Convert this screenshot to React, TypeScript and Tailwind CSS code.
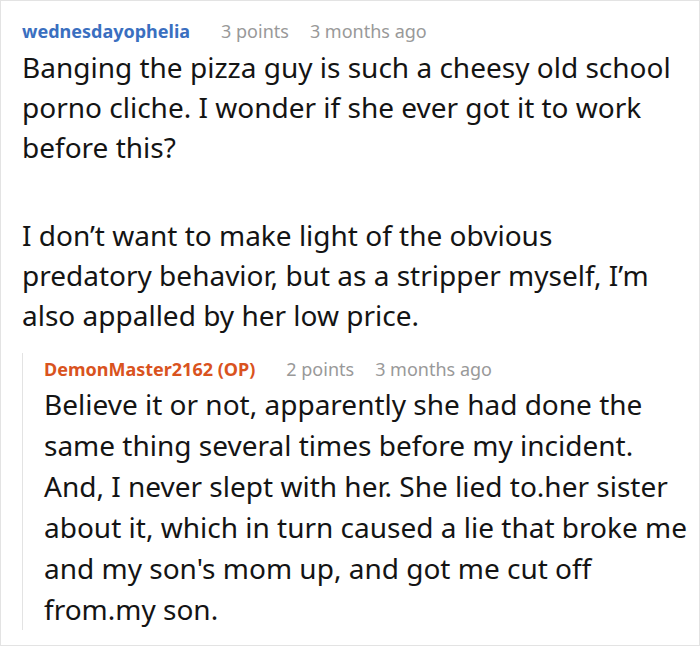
const FONT = "font-['Noto_Sans',sans-serif]";

function Meta({ name, color, points, ago }: { name: string; color: string; points: string; ago: string }) {
  return (
    <div className="flex items-center text-[18px] leading-[24px]">
      <span className={`font-bold ${color}`}>{name}</span>
      <span className="ml-[31px] text-[#999999]">{points}</span>
      <span className="ml-[21px] text-[#999999]">{ago}</span>
    </div>
  );
}

export default function App() {
  return (
    <div className={`${FONT} w-[700px] h-[646px] bg-white border border-[#e3e3e3] pl-[21px] pr-[8px] pt-[18px]`}>
      <Meta name="wednesdayophelia" color="text-[#3a6fc0]" points="3 points" ago="3 months ago" />
      <div className="mt-[4px] pr-[5px] text-[28px] leading-[40px] text-[#141414]">
        <p>
          Banging the pizza guy is such a cheesy old school porno cliche. I wonder if she ever got it to work
          before this?
        </p>
        <p className="mt-[48px]">
          I don’t want to make light of the obvious predatory behavior, but as a stripper myself, I’m also
          appalled by her low price.
        </p>
      </div>
      <div className="mt-[18px] border-l border-[#e3e3e3] pl-[21px] pt-[4px]">
        <Meta name="DemonMaster2162 (OP)" color="text-[#d9531e]" points="2 points" ago="3 months ago" />
        <p className="mt-[3px] mb-[-4px] text-[28px] leading-[41px] text-[#141414]">
          Believe it or not, apparently she had done the same thing several times before my incident. And, I
          never slept with her. She lied to.her sister about it, which in turn caused a lie that broke me and my
          son's mom up, and got me cut off from.my son.
        </p>
      </div>
    </div>
  );
}
